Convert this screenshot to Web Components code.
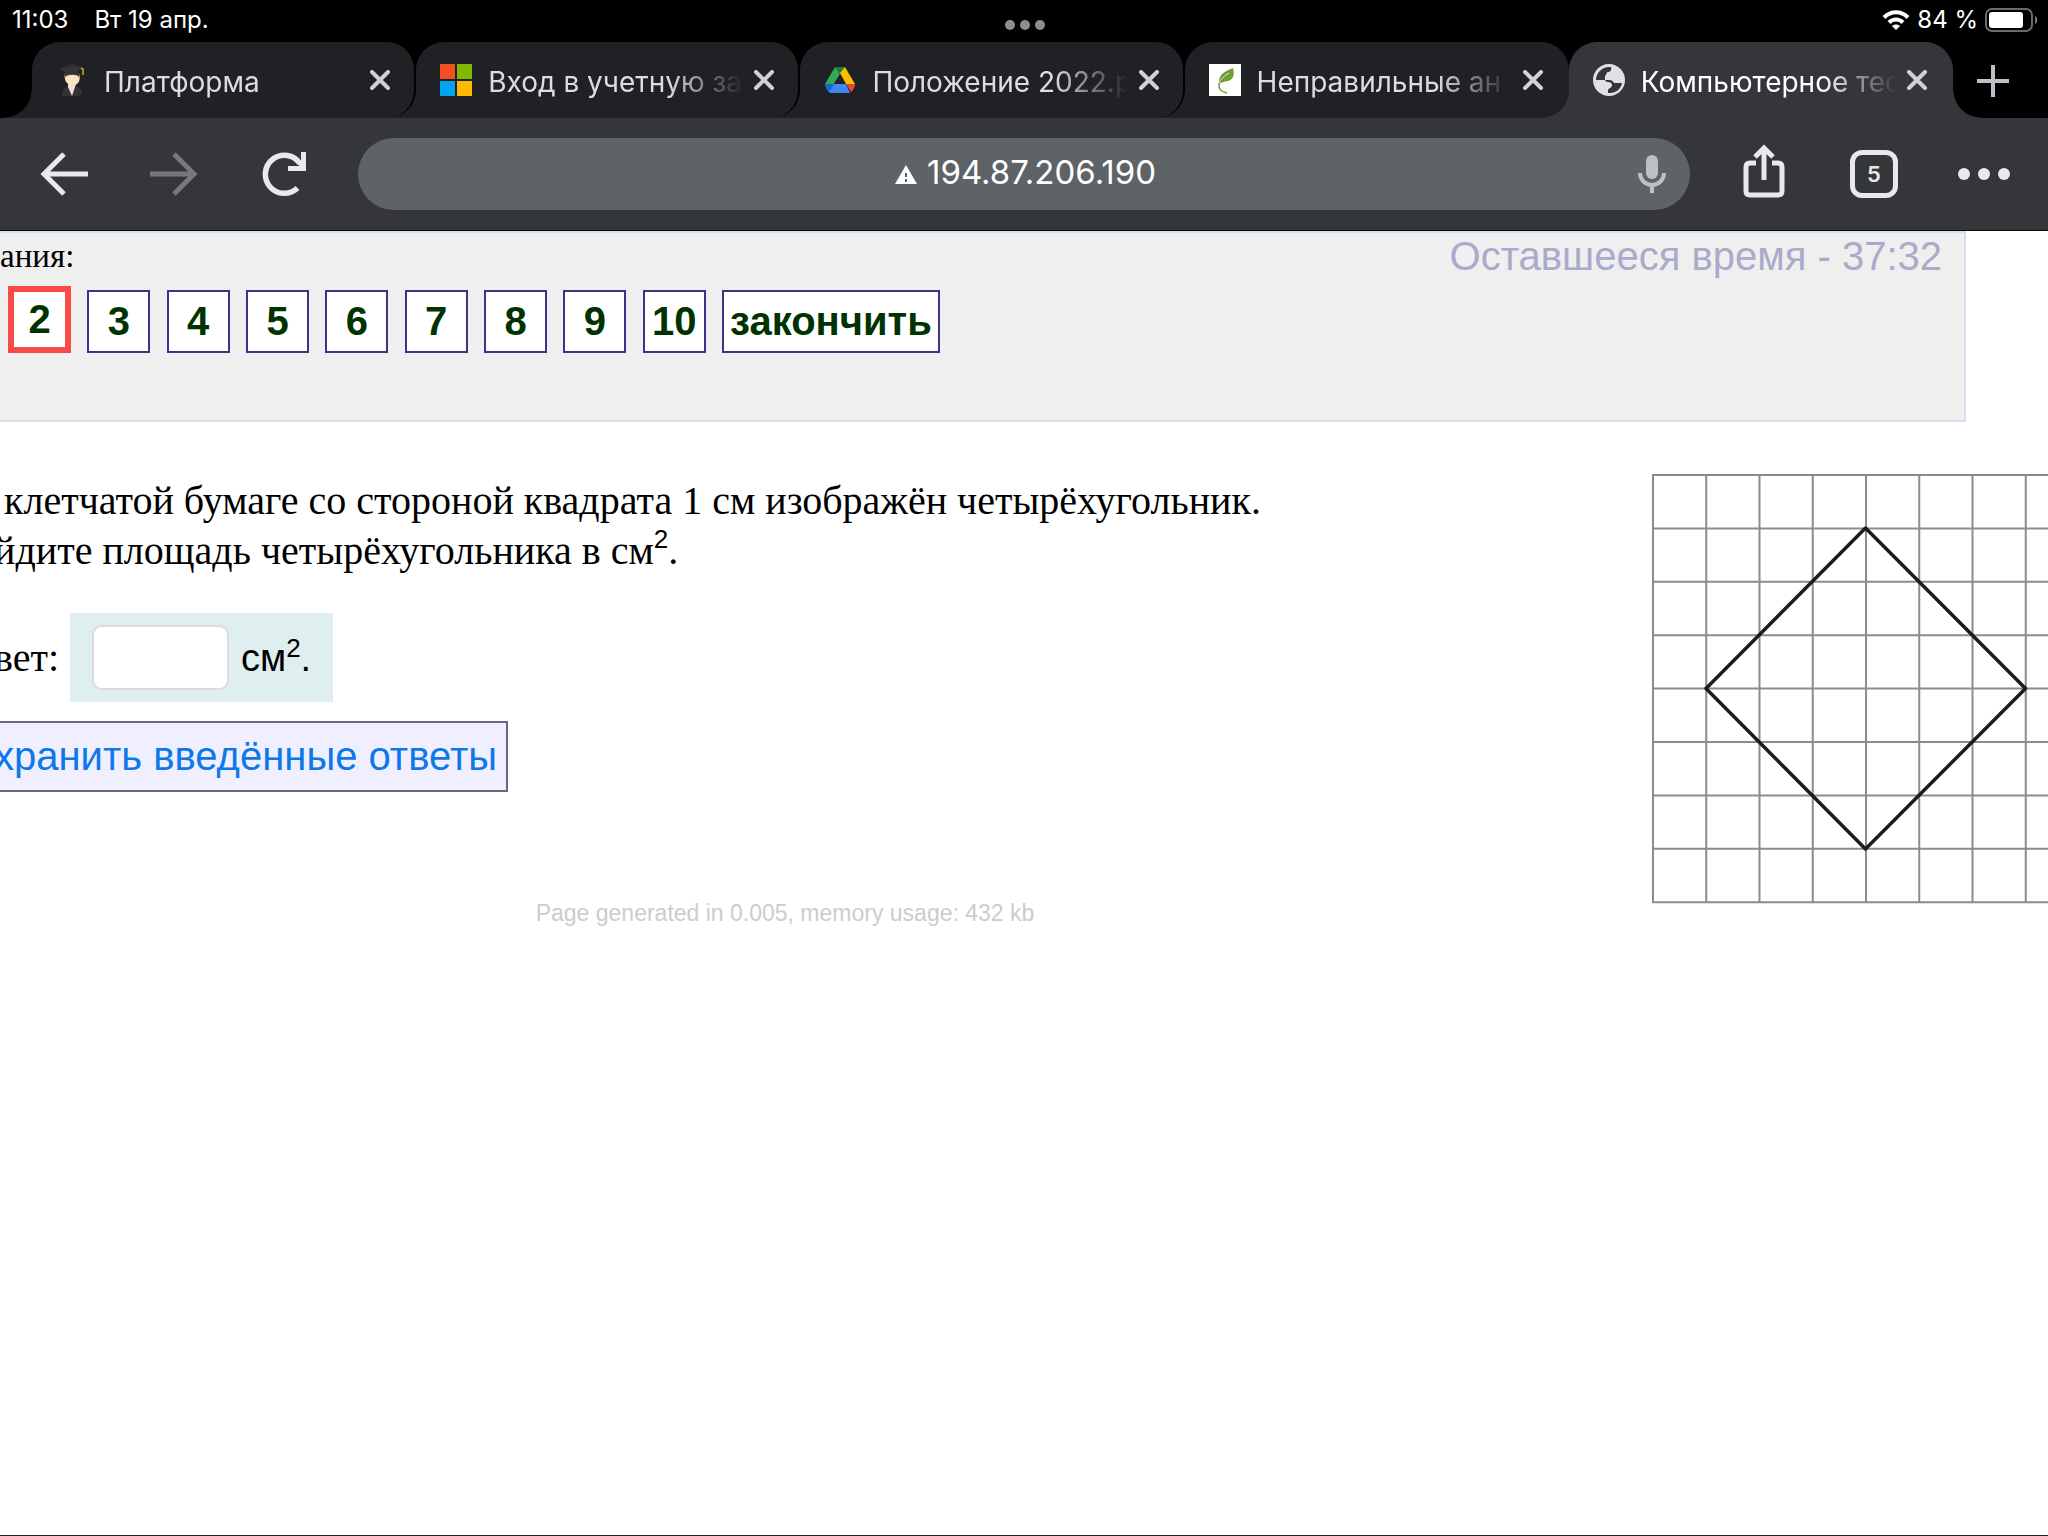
<!DOCTYPE html>
<html lang="ru">
<head>
<meta charset="utf-8">
<meta name="viewport" content="width=device-width, initial-scale=1">
<title>Компьютерное тестирование</title>
<style>
  body {
    margin: 0;
    background: #fff;
    font-family: Inter, "Liberation Sans", sans-serif;
  }
</style>
</head>
<body>
<browser-window>
  <status-bar slot="chrome" time="11:03" date="Вт 19 апр." battery="84 %"></status-bar>
  <tab-strip slot="chrome">
    <browser-tab label="Платформа" icon="student"></browser-tab>
    <browser-tab label="Вход в учетную за" icon="windows"></browser-tab>
    <browser-tab label="Положение 2022.p" icon="drive"></browser-tab>
    <browser-tab label="Неправильные ан" icon="leaf"></browser-tab>
    <browser-tab label="Компьютерное тес" icon="globe" active></browser-tab>
  </tab-strip>
  <tool-bar slot="chrome" address="194.87.206.190" tabs="5"></tool-bar>

  <question-nav>
    <span slot="label">ания:</span>
    <span slot="timer">Оставшееся время - 37:32</span>
  </question-nav>
  <test-question>
    <span>клетчатой бумаге со стороной квадрата 1 см изображён четырёхугольник.</span>
    <grid-figure slot="figure"></grid-figure>
    <answer-form slot="answer"></answer-form>
    <span slot="footer">Page generated in 0.005, memory usage: 432 kb</span>
  </test-question>
</browser-window>

<script>
const icons = {
  student: `
    <svg viewBox="0 0 32 32">
      <path d="M6 32c0-7 3-10 9-10h3c6 0 8 3 8 8l-4 2z" fill="#343434"/>
      <path d="M12 20h8l-4 12-4-9z" fill="#f1e3d3"/>
      <path d="M9 9h14c1 4 1 8-1 10-3 3-8 3-11 0-2-2-3-6-2-10z" fill="#fbe3c4"/>
      <path d="M9 13V9h14v4c-2-3-11-3-14 0z" fill="#503325"/>
      <path d="M4 5L16 0l12 4-6 3v4c-4-2-9-2-13 0V8z" fill="#333"/>
      <path d="M25 4l2 1v6" fill="none" stroke="#c8a92b" stroke-width="1.5"/>
    </svg>`,
  windows: `
    <svg viewBox="0 0 32 32">
      <path d="M0 0h15v15H0z" fill="#f25022"/>
      <path d="M17 0h15v15H17z" fill="#7fba00"/>
      <path d="M0 17h15v15H0z" fill="#00a4ef"/>
      <path d="M17 17h15v15H17z" fill="#ffb900"/>
    </svg>`,
  drive: `
    <svg viewBox="0 0 32 32">
      <path d="M11 3L1 20l4 8 12-20z" fill="#34a853"/>
      <path d="M11 3h10l-5 8z" fill="#188038"/>
      <path d="M21 3l10 17h-9l-6-11z" fill="#fbbc04"/>
      <path d="M1 20h9l-5 8c-2-1-4-5-4-8z" fill="#1967d2"/>
      <path d="M10 20h12l4 9H6l-1-1z" fill="#4285f4"/>
      <path d="M22 20h9c0 3-2 7-4 8z" fill="#ea4335"/>
    </svg>`,
  leaf: `
    <svg viewBox="0 0 32 32">
      <path d="M0 0h32v32H0z" fill="#fff"/>
      <path d="M24 4c2 7 0 12-5 13-4 1-7 1-9 3 0-7 1-11 14-16z" fill="#6f9d3a"/>
      <path d="M20 9c-11 7-15 17-2 20" fill="none" stroke="#6f9d3a" stroke-width="1.5"/>
      <path d="M20 9c-5 3-8 6-10 10" fill="none" stroke="#dceac8" stroke-width="1"/>
    </svg>`,
  globe: `
    <svg viewBox="0 0 32 32">
      <circle cx="16" cy="16" r="16" fill="#e0e1e5"/>
      <path d="M3 16C3 9 9 3 16 3h2c1 3-1 5-3 5-2 0-1 3-3 4v4h5c3 0 3 3 5 3h7c-1 6-6 10-12 10h-2v-3c1-2 4-2 4-5 0-2-2-3-4-3-3 0-2-2-4-2z" fill="#35363a"/>
    </svg>`
};

function define(name, html, setup) {
  const template = document.createElement('template');
  template.innerHTML = html;

  window.customElements.define(name, class extends HTMLElement {
    constructor() {
      super();
      this.attachShadow({ mode: 'open' });
      this.shadowRoot.appendChild(template.content.cloneNode(true));
    }

    connectedCallback() {
      if (setup) setup(this, this.shadowRoot);
    }
  });
}

define('browser-window', `
<style>
  :host {
    display: flex;
    flex-direction: column;
    box-sizing: border-box;
    min-height: 100vh;
    overflow: hidden;
    border-bottom: 1px solid #202124;
  }
  header {
    background: #000;
    border-bottom: 1px solid #0c0d14;
  }
</style>
<header><slot name="chrome"></slot></header>
<main><slot></slot></main>
`);

define('status-bar', `
<style>
  :host {
    display: grid;
    grid-template-columns: 1fr auto 1fr;
    align-items: center;
    height: 42px;
    padding: 0 10px 0 12px;
    color: #fff;
    font-size: 24px;
    line-height: 40px;
  }
  .left, .right { height: 40px; margin-bottom: 2px; }
  .left { display: flex; gap: 26px; }
  .right {
    display: flex;
    justify-content: flex-end;
    align-items: center;
    gap: 7px;
  }
  svg { display: block; }
  .dots { padding-top: 8px; }
</style>
<div class="left"><span class="time"></span><span class="date"></span></div>
<svg class="dots" width="44" height="12" viewBox="0 0 44 12" fill="#8e8e8e">
  <circle cx="7" cy="6" r="5"/><circle cx="22" cy="6" r="5"/><circle cx="37" cy="6" r="5"/>
</svg>
<div class="right">
  <svg width="28" height="20" viewBox="0 0 28 20" fill="none" stroke="#fff" stroke-width="4">
    <path d="M2 7.500c7-7 17-7 24 0"/>
    <path d="M7 12.500c4-4 10-4 14 0"/>
    <path d="M14 20l-4-4c2-2 6-2 8 0z" fill="#fff" stroke="none"/>
  </svg>
  <span class="battery"></span>
  <svg width="53" height="24" viewBox="0 0 53 24">
    <rect x="1" y="1" width="46" height="22" rx="6" fill="none" stroke="#6b6b6b" stroke-width="2"/>
    <rect x="4" y="4" width="34" height="16" rx="3" fill="#fff"/>
    <path d="M50 8c3 1 3 7 0 8z" fill="#7b7b7b"/>
  </svg>
</div>
`, (host, root) => {
  for (const key of ['time', 'date', 'battery']) {
    root.querySelector('.' + key).textContent = host.getAttribute(key);
  }
});

define('tab-strip', `
<style>
  :host {
    display: flex;
    padding-left: 32px;
    height: 76px;
  }
  nav {
    display: flex;
    flex: 1;
    min-width: 0;
  }
  button {
    width: 95px;
    padding: 0 15px 0 0;
    border: 0;
    background: none;
  }
  svg { display: block; margin: 2px auto 0; }
</style>
<nav aria-label="Вкладки"><slot></slot></nav>
<button type="button" aria-label="Новая вкладка">
  <svg width="32" height="32" viewBox="0 0 32 32" stroke="#bdc1c6" stroke-width="4"><path d="M16 0v32M0 16h32"/></svg>
</button>
`, host => {
  // every tab lies over the foot of the one after it
  const tabs = [...host.children];
  tabs.forEach((tab, i) => { tab.style.zIndex = tabs.length - i; });
});

define('browser-tab', `
<style>
  :host {
    --fill: #202124;
    position: relative;
    display: flex;
    flex: 1;
    min-width: 0;
    color: #dcdde1;
  }
  :host([active]) {
    --fill: #35363a;
    color: #fff;
  }
  :host::before {
    content: "";
    position: absolute;
    z-index: -1;
    left: -28px;
    bottom: 0;
    width: 28px;
    height: 28px;
    background: var(--fill);
  }
  :host(:first-child)::before {
    background: radial-gradient(circle at 0 0, transparent 27px, var(--fill) 28px);
  }
  :host([active])::after {
    content: "";
    position: absolute;
    right: -28px;
    bottom: 0;
    width: 28px;
    height: 28px;
    background: radial-gradient(circle at 100% 0, transparent 27px, var(--fill) 28px);
  }
  .tab {
    display: flex;
    flex: 1;
    align-items: center;
    min-width: 0;
    padding: 0 14px 0 24px;
    border-right: 2px solid #000;
    border-radius: 28px 28px 28px 0;
    background: var(--fill);
  }
  :host([active]) .tab {
    border-right-color: var(--fill);
    border-radius: 28px 28px 0 0;
  }
  :host(:nth-last-child(2)) .tab { border-right-color: var(--fill); }
  .icon { flex: none; width: 32px; height: 32px; }
  .icon svg { display: block; }
  a {
    flex: 1;
    overflow: hidden;
    margin: 4px 0 0 16px;
    color: inherit;
    font-size: 28px;
    line-height: 40px;
    text-decoration: none;
    white-space: nowrap;
    mask-image: linear-gradient(to right, #000 calc(100% - 76px), transparent);
  }
  button {
    flex: none;
    width: 40px;
    height: 40px;
    padding: 10px;
    border: 0;
    background: none;
    color: #d0d1d5;
  }
  button svg { display: block; }
</style>
<div class="tab">
  <span class="icon"></span>
  <a href="#"></a>
  <button type="button" aria-label="Закрыть вкладку">
    <svg width="20" height="20" viewBox="0 0 20 20" stroke="currentColor" stroke-width="4" stroke-linecap="round"><path d="M2 2l16 16M18 2L2 18"/></svg>
  </button>
</div>
`, (host, root) => {
  root.querySelector('.icon').innerHTML = icons[host.getAttribute('icon')];
  root.querySelector('a').textContent = host.getAttribute('label');
});

define('tool-bar', `
<style>
  :host {
    display: flex;
    align-items: center;
    height: 112px;
    background: #35363a;
  }
  button {
    flex: none;
    width: 110px;
    height: 72px;
    padding: 0;
    border: 0;
    background: none;
    color: #e8e9ed;
    font: 600 22px/48px Inter, sans-serif;
  }
  button svg { display: block; margin: auto; }
  .back { margin-left: 9px; }
  .reload { margin-right: 19px; }
  .forward { color: #77787b; }
  .address {
    display: flex;
    flex: 1;
    align-items: center;
    height: 72px;
    border-radius: 36px;
    background: #5e6367;
  }
  label {
    display: flex;
    flex: 1;
    justify-content: center;
    align-items: center;
    gap: 10px;
    padding: 0 0 4px 82px;
  }
  label svg { padding-top: 6px; }
  input {
    width: 232px;
    padding: 0;
    border: 0;
    outline: 0;
    background: none;
    color: #fff;
    font: 33px/40px Inter, sans-serif;
    field-sizing: content;
  }
  .mic { width: 76px; color: #bdc1c6; }
  .share { margin-left: 19px; }
  .count {
    box-sizing: border-box;
    width: 48px;
    height: 48px;
    margin: 0 31px;
    border: 5px solid #e8e9ed;
    border-radius: 12px;
    line-height: 38px;
  }
  .more { margin-right: 9px; }
</style>
<button class="back" type="button" aria-label="Назад">
  <svg width="48" height="44" viewBox="0 0 48 44" fill="none" stroke="currentColor" stroke-width="5"><path d="M48 22H4M24 2L4 22l20 20"/></svg>
</button>
<button class="forward" type="button" aria-label="Вперёд">
  <svg width="48" height="44" viewBox="0 0 48 44" fill="none" stroke="currentColor" stroke-width="5"><path d="M0 22h44M24 2l20 20-20 20"/></svg>
</button>
<button class="reload" type="button" aria-label="Обновить">
  <svg width="44" height="44" viewBox="0 0 44 44" fill="none" stroke="currentColor" stroke-width="5.500">
    <path d="M35.500 36A19 19 0 1 1 38 11.500"/>
    <path d="M26 16.500h15.500V0" stroke-width="5"/>
    <path d="M32 9l9 8V8z" fill="currentColor" stroke="none"/>
  </svg>
</button>
<div class="address">
  <label>
    <svg width="22" height="20" viewBox="0 0 22 20"><path d="M11 0l11 19H0z" fill="#fff"/><path d="M11 8v4M11 14v3" stroke="#5e6367" stroke-width="2"/></svg>
    <input type="text" aria-label="Адрес" spellcheck="false">
  </label>
  <button class="mic" type="button" aria-label="Голосовой поиск">
    <svg width="28" height="38" viewBox="0 0 28 38" fill="none" stroke="currentColor" stroke-width="4"><rect x="8" width="12" height="24" rx="6" fill="currentColor" stroke="none"/><path d="M2 18a12 12 0 0 0 24 0M14 30v8"/></svg>
  </button>
</div>
<button class="share" type="button" aria-label="Поделиться">
  <svg width="42" height="56" viewBox="0 3 42 56" fill="none" stroke="currentColor" stroke-width="5" overflow="visible"><path d="M13 20H7q-4 0-4 4v24q0 4 4 4h28q4 0 4-4V24q0-4-4-4h-6"/><path d="M21 37V5M12 14l9-9 9 9"/></svg>
</button>
<button class="count" type="button" aria-label="Открытые вкладки"></button>
<button class="more" type="button" aria-label="Меню">
  <svg width="52" height="12" viewBox="0 0 52 12" fill="currentColor"><circle cx="6" cy="6" r="6"/><circle cx="26" cy="6" r="6"/><circle cx="46" cy="6" r="6"/></svg>
</button>
`, (host, root) => {
  root.querySelector('input').value = host.getAttribute('address');
  root.querySelector('.count').textContent = host.getAttribute('tabs');
});

define('question-nav', `
<style>
  :host {
    display: block;
    box-sizing: border-box;
    height: 191px;
    margin-right: 82px;
    border: 2px solid #d3e0ee;
    border-left: 0;
    background: #efefef;
  }
  .top {
    display: flex;
    justify-content: space-between;
    padding-right: 22px;
    font: 33px/46px "Liberation Serif", serif;
  }
  .timer {
    color: #aaaacc;
    font: 40px/46px "Liberation Sans", sans-serif;
  }
  nav {
    padding: 7px 0 0 8px;
    font: bold 30px/60px "Liberation Sans", sans-serif;
    white-space: nowrap;
  }
  a {
    display: inline-block;
    box-sizing: border-box;
    min-width: 63px;
    margin-right: 8px;
    padding: 0 6px;
    border: 2px solid #3a3588;
    background: #fff;
    color: #003300;
    font-size: 40px;
    line-height: 59px;
    text-align: center;
    text-decoration: none;
    vertical-align: bottom;
  }
  a.number { padding: 0; }
  a.current {
    border: 6px solid #f94a4a;
    line-height: 55px;
  }
</style>
<div class="top">
  <slot name="label"></slot>
  <div class="timer"><slot name="timer"></slot></div>
</div>
<nav></nav>
`, (host, root) => {
  const nav = root.querySelector('nav');
  const links = [];
  for (let n = 2; n <= 10; n++) {
    links.push(`<a class="number${n === 2 ? ' current' : ''}" href="#${n}">${n}</a>`);
  }
  links.push('<a href="#end">закончить</a>');
  nav.innerHTML = links.join(' ');
});

define('test-question', `
<style>
  :host {
    display: grid;
    grid-template-columns: minmax(0, 1fr) auto;
    gap: 82px;
    padding-top: 52px;
    font: 40px/50px "Liberation Serif", serif;
  }
  /* the page is scrolled a little past the start of the lines */
  article {
    margin-left: -6px;
    padding-top: 2px;
  }
  p { margin: 0; }
  .first { padding-left: 10px; }
  .second { margin-bottom: 37px; }
  sup {
    font: 26px/0 "Liberation Sans", sans-serif;
    vertical-align: 16px;
  }
  footer {
    margin-top: 106px;
    padding-left: 6px;
    color: #ccc;
    font: 23px/30px "Liberation Sans", sans-serif;
    text-align: center;
  }
</style>
<article>
  <p class="first"><slot></slot></p>
  <p class="second">йдите площадь четырёхугольника в см<sup>2</sup>.</p>
  <slot name="answer"></slot>
  <footer><slot name="footer"></slot></footer>
</article>
<slot name="figure"></slot>
`);

define('answer-form', `
<style>
  :host { display: block; }
  form { margin: 0; }
  .row {
    display: flex;
    align-items: center;
    gap: 11px;
    margin-bottom: 19px;
  }
  .box {
    display: flex;
    align-items: center;
    gap: 12px;
    padding: 12px 22px;
    background: #dfeeee;
    font: 38px/50px "Liberation Sans", sans-serif;
  }
  input {
    box-sizing: border-box;
    width: 137px;
    height: 65px;
    border: 2px solid #dcdcdc;
    border-radius: 10px;
    background: #fff;
    font-size: 32px;
  }
  sup {
    font-size: 26px;
    line-height: 0;
    vertical-align: 14px;
  }
  button {
    display: block;
    padding: 0 9px 0 0;
    border: 2px solid #6a6880;
    border-left: 0;
    background: #efefff;
    color: #0f78e8;
    font: 40px/67px "Liberation Sans", sans-serif;
  }
</style>
<form>
  <div class="row">
    <label for="answer">вет:</label>
    <span class="box"><input id="answer" type="text"><span>см<sup>2</sup>.</span></span>
  </div>
  <button type="button">хранить введённые ответы</button>
</form>
`);

define('grid-figure', `
<style>
  :host { display: block; width: 396px; overflow: hidden; }
  svg { display: block; }
</style>
<svg width="430" height="430" viewBox="0 0 430 430" fill="none" role="img" aria-label="Четырёхугольник на клетчатой бумаге">
  <g class="lines" stroke="#8c8c8c" stroke-width="2"></g>
  <path d="M213.500 54L373.500 214.500 213.500 375 54 214.500z" stroke="#1c1c1c" stroke-width="3.500" stroke-linejoin="round"/>
</svg>
`, (host, root) => {
  let d = '';
  for (let i = 0; i <= 8; i++) {
    const x = 1 + i * 53.25;
    const y = 1 + i * 53.4;
    d += `M${x} 0V429M0 ${y}H429`;
  }
  root.querySelector('.lines').innerHTML = `<path d="${d}"/>`;
});
</script>
</body>
</html>
